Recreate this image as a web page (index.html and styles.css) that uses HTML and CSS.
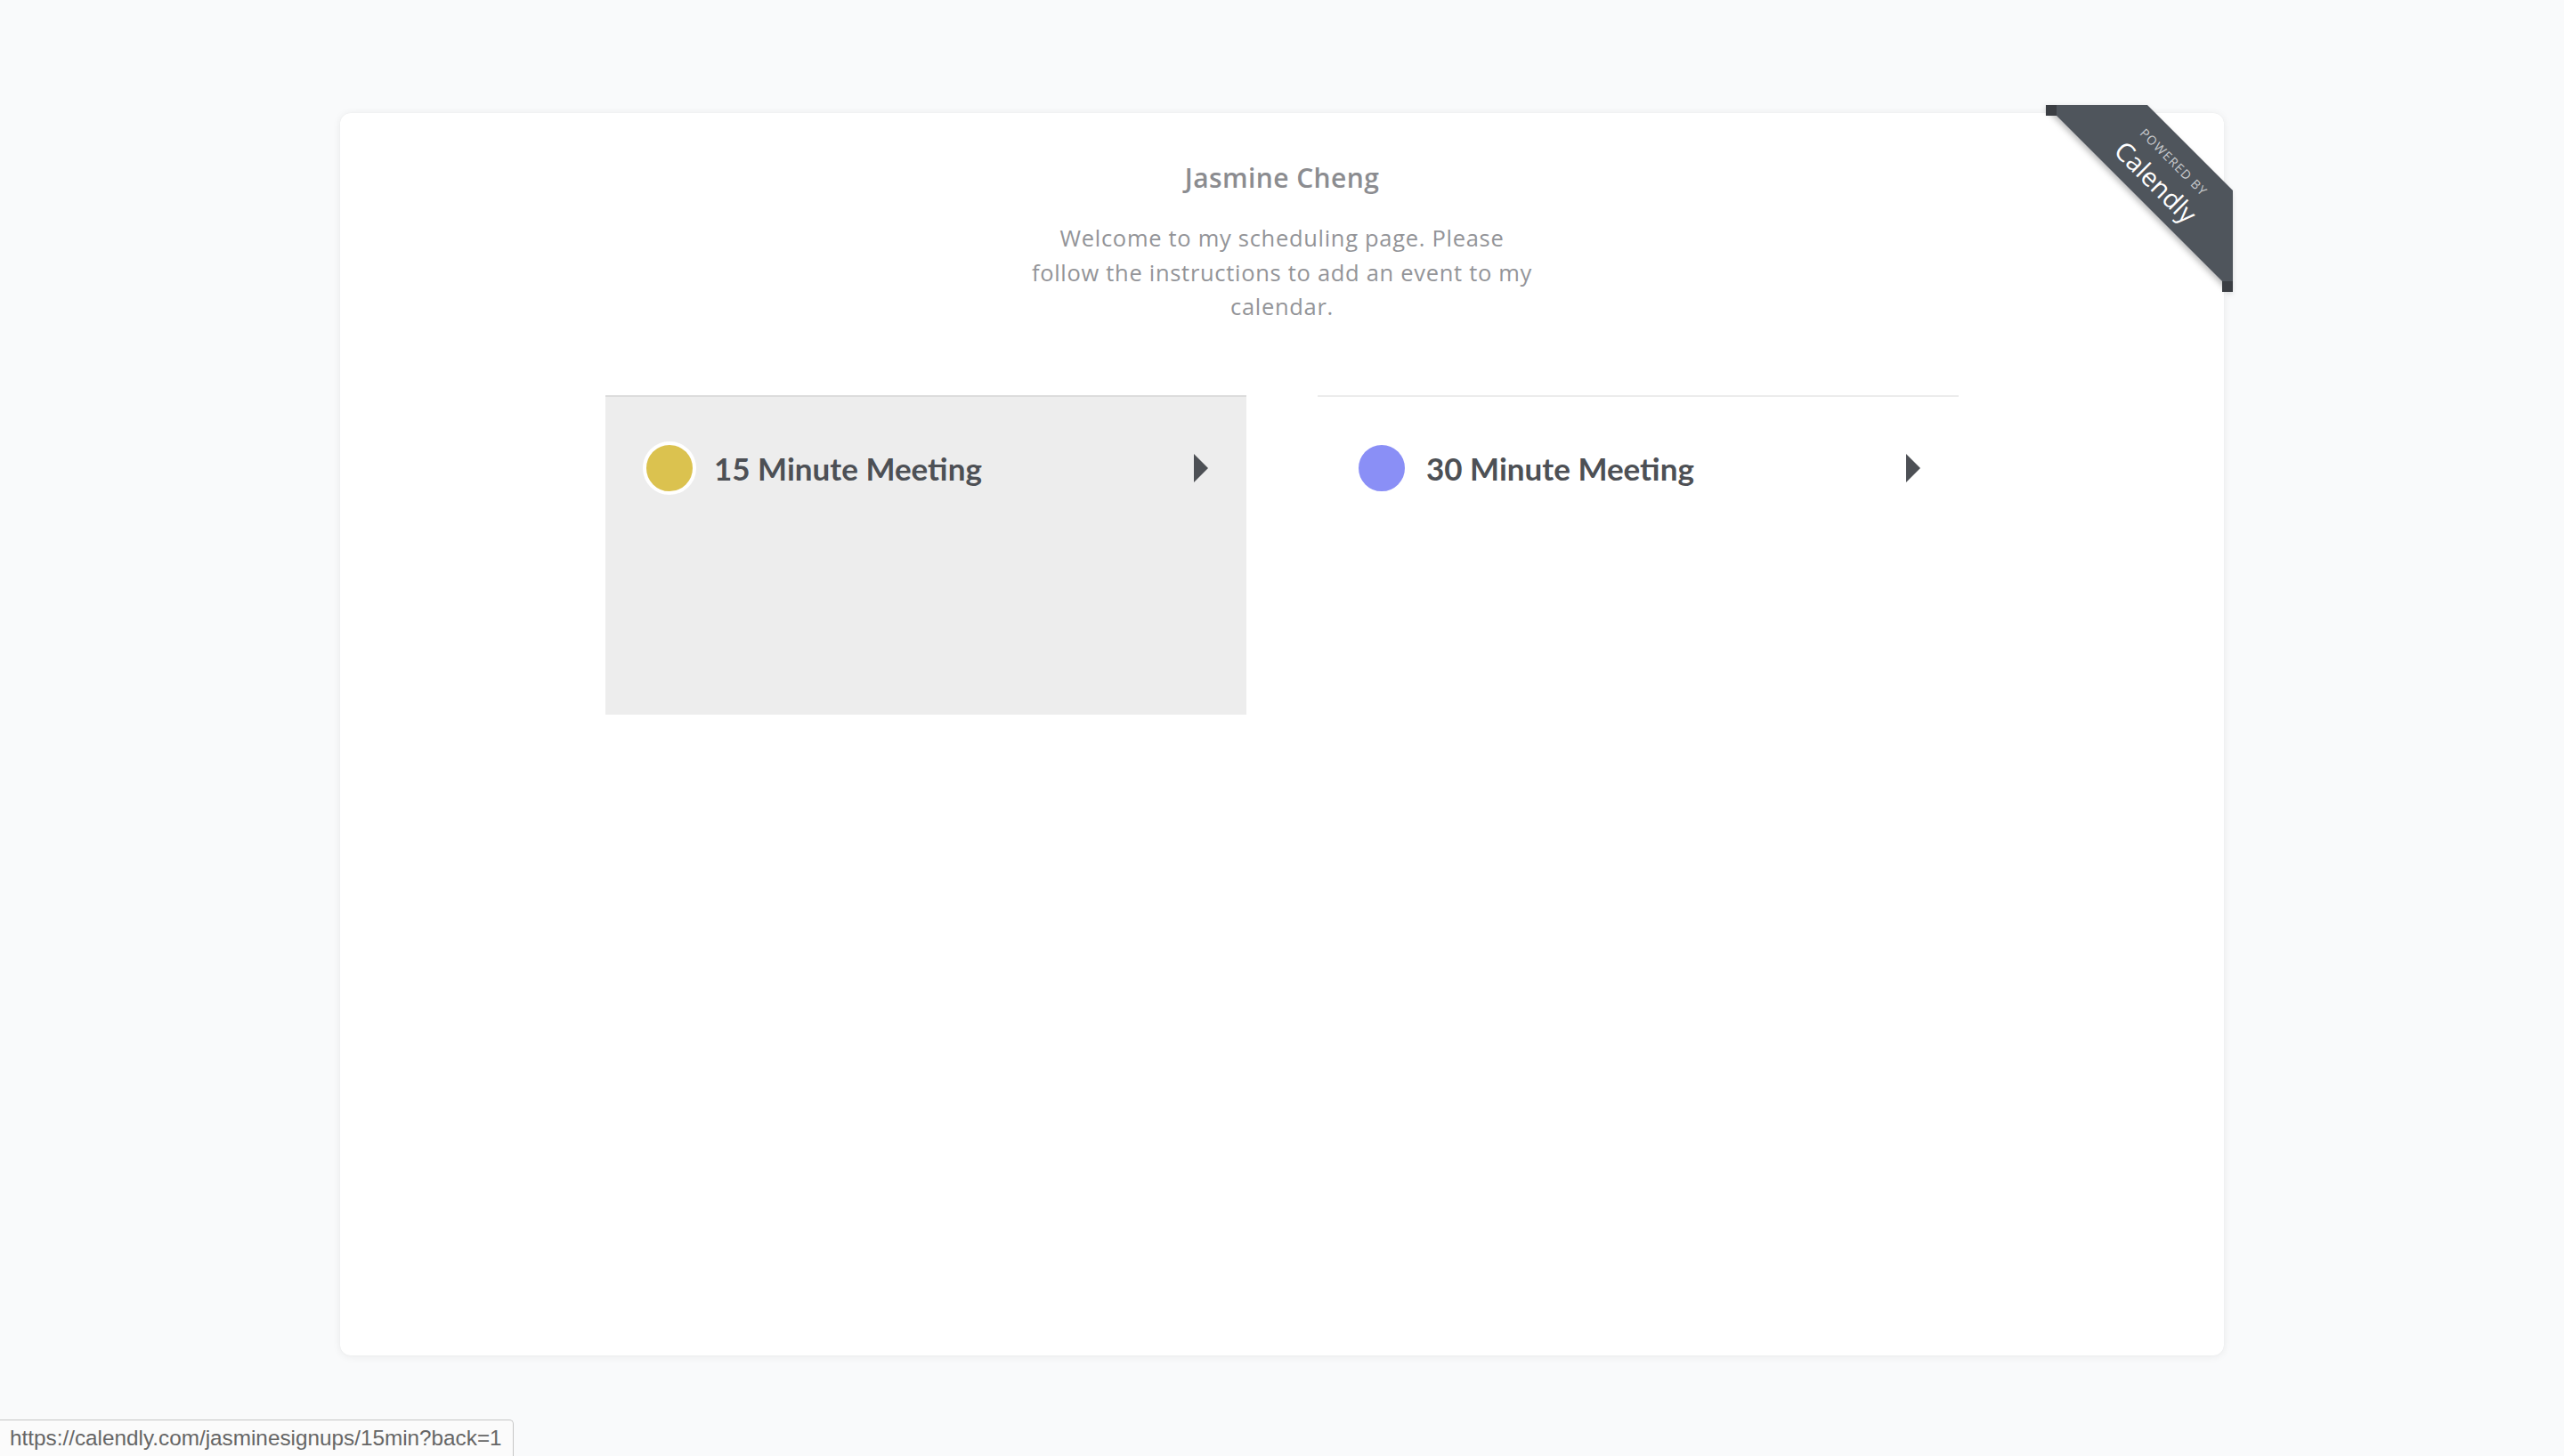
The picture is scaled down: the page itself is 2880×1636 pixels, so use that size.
FILE: index.html
```html
<!DOCTYPE html>
<html lang="en">
<head>
<meta charset="utf-8">
<title>Jasmine Cheng</title>
<link rel="stylesheet" href="styles.css">
</head>
<body>
<main class="page">
  <section class="card">
    <svg class="ribbon" width="210" height="210" viewBox="0 0 210 210" aria-label="Powered by Calendly">
      <defs>
        <filter id="rs" x="-20%" y="-20%" width="140%" height="140%">
          <feDropShadow dx="-2" dy="3" stdDeviation="3" flood-color="#000" flood-opacity="0.25"/>
        </filter>
      </defs>
      <polygon points="0,0 114,0 210,96 210,210" fill="#50555c" filter="url(#rs)"/>
      <rect x="0" y="0" width="12" height="12" fill="#3b3e43"/>
      <rect x="198" y="198" width="12" height="12" fill="#3b3e43"/>
      <text class="rb-small" x="144" y="64" transform="rotate(45 144 64)" text-anchor="middle" dominant-baseline="central">POWERED BY</text>
      <text class="rb-big" x="124" y="86" transform="rotate(45 124 86)" text-anchor="middle" dominant-baseline="central">Calendly</text>
    </svg>

    <header class="intro">
      <h1 class="name">Jasmine Cheng</h1>
      <p class="welcome">Welcome to my scheduling page. Please follow the instructions to add an event to my calendar.</p>
    </header>

    <div class="events">
      <a class="event event-active" href="#">
        <span class="dot dot-yellow"></span>
        <span class="event-title">15 Minute Meeting</span>
        <span class="arrow"></span>
      </a>
      <a class="event" href="#">
        <span class="dot dot-purple"></span>
        <span class="event-title">30 Minute Meeting</span>
        <span class="arrow"></span>
      </a>
    </div>
  </section>
</main>
<div class="statusbar">https://calendly.com/jasminesignups/15min?back=1</div>
</body>
</html>
```

FILE: styles.css
```css
html, body {
  margin: 0;
  padding: 0;
}
body {
  background: #f9fafb;
  font-family: "Lato", "Open Sans", sans-serif;
  height: 1636px;
  overflow: hidden;
}
.page {
  padding-top: 127px;
}
.card {
  position: relative;
  width: 2116px;
  height: 1396px;
  margin: 0 auto;
  background: #ffffff;
  border-radius: 12px;
  box-shadow: 0 1px 10px rgba(0, 0, 0, 0.07), 0 0 1px rgba(0, 0, 0, 0.08);
  box-sizing: border-box;
  padding-top: 55px;
}
.ribbon {
  position: absolute;
  top: -9px;
  right: -10px;
  overflow: visible;
}
.rb-small {
  font-family: "Open Sans", sans-serif;
  font-size: 14px;
  letter-spacing: 1.3px;
  fill: #c9cbce;
}
.rb-big {
  font-family: "Open Sans", sans-serif;
  font-size: 29px;
  fill: #ffffff;
}
.intro {
  text-align: center;
}
.name {
  margin: 0;
  font-family: "Open Sans", sans-serif;
  font-size: 30px;
  letter-spacing: 0.4px;
  line-height: 36px;
  font-weight: 600;
  color: #8b8c90;
}
.welcome {
  margin: 30px auto 0;
  max-width: 575px;
  font-family: "Open Sans", sans-serif;
  font-size: 25.5px;
  letter-spacing: 0.7px;
  line-height: 38.5px;
  color: #939498;
}
.events {
  display: flex;
  gap: 80px;
  width: 1520px;
  margin: 80px auto 0;
}
.event {
  flex: 1;
  display: flex;
  height: 359px;
  box-sizing: border-box;
  border-top: 2px solid #ececec;
  padding: 50px 43px 0 42px;
  align-items: flex-start;
  text-decoration: none;
  color: #4d5055;
}
.event-active {
  background: #ededed;
  border-top-color: #dcdcdc;
}
.dot {
  flex: none;
  width: 52px;
  height: 52px;
  border-radius: 50%;
  border: 4px solid #ffffff;
}
.dot-yellow {
  background: #dbc24f;
}
.dot-purple {
  background: #8a8ff6;
}
.event-title {
  margin-left: 20px;
  font-size: 35px;
  line-height: 60px;
  font-weight: 700;
}
.arrow {
  margin-left: auto;
  margin-top: 14px;
  width: 0;
  height: 0;
  border-left: 16px solid #4d5055;
  border-top: 16px solid transparent;
  border-bottom: 16px solid transparent;
}
.statusbar {
  position: fixed;
  left: 0;
  bottom: 0;
  height: 41px;
  box-sizing: border-box;
  padding: 5px 10px 0 11px;
  width: 577px;
  background: #fbfbfb;
  border: 1px solid #c6c6c6;
  border-left: none;
  border-bottom: none;
  border-top-right-radius: 5px;
  font-family: "Liberation Sans", Arial, sans-serif;
  font-size: 24.3px;
  line-height: 30px;
  color: #666666;
  white-space: nowrap;
}
```
